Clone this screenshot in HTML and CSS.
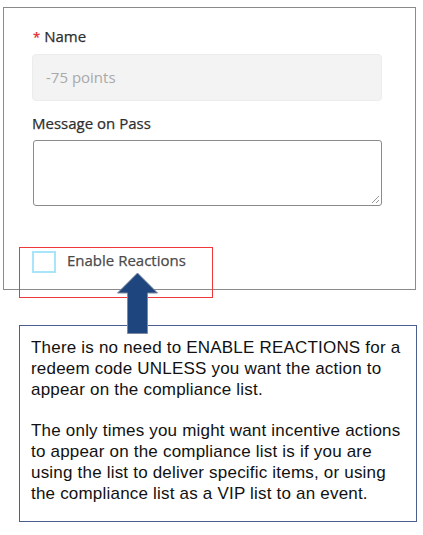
FILE: index.html
```html
<!DOCTYPE html>
<html>
<head>
<meta charset="utf-8">
<link rel="stylesheet" href="styles.css">
</head>
<body>
<div class="page">
  <div class="panel">
    <div class="label"><span class="req">*</span>Name</div>
    <div class="input">-75 points</div>
    <div class="label label-msg">Message on Pass</div>
    <div class="textarea">
      <svg class="grip" width="10" height="10" viewBox="0 0 10 10"><path d="M9 2 L2 9 M9 6 L6 9" stroke="#999" stroke-width="1" fill="none"/></svg>
    </div>
    <div class="check-row">
      <span class="checkbox"></span>
      <span class="check-label">Enable Reactions</span>
    </div>
  </div>
  <div class="note">
    <p>There is no need to ENABLE REACTIONS for a<br>redeem code UNLESS you want the action to<br>appear on the compliance list.</p>
    <p>The only times you might want incentive actions<br>to appear on the compliance list is if you are<br>using the list to deliver specific items, or using<br>the compliance list as a VIP list to an event.</p>
  </div>
  <div class="highlight"></div>
  <svg class="arrow" width="42" height="63" viewBox="0 0 42 63">
    <polygon points="20.5,1 40.5,21 30.5,21 30.5,61.5 10.5,61.5 10.5,21 0.5,21" fill="#1f457f" stroke="#7d8aa0" stroke-width="1"/>
  </svg>
</div>
</body>
</html>
```
FILE: styles.css
```css
html, body {
  margin: 0;
  padding: 0;
  background: #ffffff;
}
.page {
  position: relative;
  width: 423px;
  height: 535px;
  padding-top: 7px;
  box-sizing: border-box;
}
.panel {
  margin-left: 3px;
  width: 413px;
  height: 283px;
  box-sizing: border-box;
  border: 1px solid #8a8a8a;
  padding: 18px 0 0 28px;
  font-family: "Open Sans", sans-serif;
}
.label {
  height: 20px;
  font-size: 15px;
  line-height: 20px;
  color: #2e2e2e;
  font-weight: 400;
  -webkit-text-stroke: 0.25px #2e2e2e;
}
.req {
  color: #e8202a;
  -webkit-text-stroke: 0.25px #e8202a;
  font-size: 13px;
  line-height: 1;
  margin-right: 4px;
  margin-left: 1px;
}
.input {
  margin-top: 8px;
  width: 350px;
  height: 47px;
  box-sizing: border-box;
  background: #f3f3f3;
  border: 1px solid #ececec;
  border-radius: 4px;
  padding-left: 13px;
  font-size: 15px;
  line-height: 45px;
  color: #a9a9a9;
}
.label-msg {
  margin-top: 12px;
}
.textarea {
  position: relative;
  margin-top: 7px;
  margin-left: 1px;
  width: 349px;
  height: 66px;
  box-sizing: border-box;
  border: 1px solid #8b8b8b;
  border-radius: 3px;
}
.grip {
  position: absolute;
  right: 1px;
  bottom: 1px;
}
.check-row {
  display: flex;
  align-items: center;
  margin-top: 45px;
}
.checkbox {
  width: 24px;
  height: 22px;
  box-sizing: border-box;
  border: 2px solid #a8e4fa;
}
.check-label {
  margin-left: 11px;
  font-size: 15px;
  color: #4a4a4a;
  -webkit-text-stroke: 0.25px #4a4a4a;
  margin-top: -4px;
}
.note {
  margin: 35px 0 0 19px;
  width: 398px;
  height: 197px;
  box-sizing: border-box;
  border: 1px solid #4c5e8e;
  padding: 11px 0 0 11px;
  font-family: "Liberation Sans", Arial, sans-serif;
  font-size: 17px;
  letter-spacing: 0.2px;
  line-height: 21px;
  color: #111;
}
.note p {
  margin: 0 0 20px 0;
}
.highlight {
  position: absolute;
  left: 19px;
  top: 247px;
  width: 194px;
  height: 51px;
  box-sizing: border-box;
  border: 1px solid #f0383a;
}
.arrow {
  position: absolute;
  left: 117px;
  top: 272px;
}
```
